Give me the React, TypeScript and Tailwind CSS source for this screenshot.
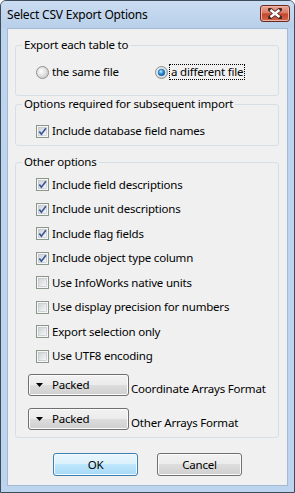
import React from "react";

function CheckBox({ checked }: { checked?: boolean }) {
  return (
    <svg width="13" height="13" viewBox="0 0 13 13" className="shrink-0">
      <defs>
        <linearGradient id="cbIn" x1="0" y1="0" x2="1" y2="1">
          <stop offset="0" stopColor="#cdd1d6" />
          <stop offset="1" stopColor="#f8f8f9" />
        </linearGradient>
      </defs>
      <rect x="0.5" y="0.5" width="12" height="12" fill="#f6f6f6" stroke="#8a978a" />
      <rect x="2.5" y="2.5" width="8" height="8" fill="url(#cbIn)" stroke="#b9bec5" strokeWidth="0.6" />
      {checked && (
        <path d="M3.3 6.4 L5.4 9.2 L9.9 3.3" fill="none" stroke="#3a5898" strokeWidth="1.7" />
      )}
    </svg>
  );
}

function Radio({ checked }: { checked?: boolean }) {
  return (
    <svg width="13" height="13" viewBox="0 0 13 13" className="shrink-0">
      <defs>
        <radialGradient id="rdOff" cx="0.4" cy="0.4" r="0.7">
          <stop offset="0" stopColor="#ffffff" />
          <stop offset="1" stopColor="#c4c4c4" />
        </radialGradient>
        <radialGradient id="rdOn" cx="0.4" cy="0.35" r="0.65">
          <stop offset="0" stopColor="#c6ecfd" />
          <stop offset="0.55" stopColor="#2b8fd8" />
          <stop offset="1" stopColor="#175a98" />
        </radialGradient>
      </defs>
      <circle cx="6.5" cy="6.5" r="6" fill="url(#rdOff)" stroke="#8f9090" />
      {checked && (
        <>
          <circle cx="6.5" cy="6.5" r="4.6" fill="#d3ebf9" />
          <circle cx="6.5" cy="6.5" r="3.3" fill="url(#rdOn)" stroke="#1d5a92" strokeWidth="0.6" />
        </>
      )}
    </svg>
  );
}

function CheckRow({ label, checked }: { label: string; checked?: boolean }) {
  return (
    <div className="h-[16px] flex items-center pl-[20px] gap-[3px] leading-[16px]">
      <CheckBox checked={checked} />
      <span>{label}</span>
    </div>
  );
}

function DropRow({ label }: { label: string }) {
  return (
    <div className="flex items-end pl-[12px] gap-[2px]">
      <div className="w-[101px] h-[22px] flex items-center rounded-[3px] border border-[#707070] bg-[linear-gradient(to_bottom,#f2f2f2_0%,#ebebeb_50%,#dddddd_50%,#cfcfcf_100%)] shadow-[inset_0_0_0_1px_#fbfbfb]">
        <svg width="7" height="4" viewBox="0 0 7 4" className="ml-[7px] mr-[9px]">
          <path d="M0 0 H7 L3.5 4 Z" fill="#000" />
        </svg>
        <span className="leading-[16px]">Packed</span>
      </div>
      <span className="leading-[16px] mb-[-1px]">{label}</span>
    </div>
  );
}

export default function App() {
  const others: [string, boolean][] = [
    ["Include field descriptions", true],
    ["Include unit descriptions", true],
    ["Include flag fields", true],
    ["Include object type column", true],
    ["Use InfoWorks native units", false],
    ["Use display precision for numbers", false],
    ["Export selection only", false],
    ["Use UTF8 encoding", false],
  ];

  return (
    <div className="w-[295px] h-[493px] flex flex-col bg-[#bdd4ee] border border-[#3e4b5b] rounded-t-[6px] overflow-hidden font-['Noto_Sans',sans-serif] text-[11.5px] tracking-[-0.2px] text-black">
      <div className="h-[27px] shrink-0 flex items-start bg-[linear-gradient(to_bottom,#cadcf1,#b9d0ea)]">
        <span className="pl-[6px] pt-[6px] leading-[16px] text-[12px]">Select CSV Export Options</span>
        <div className="ml-auto mr-[4px] mt-[4px] w-[30px] h-[17px] flex items-center justify-center rounded-[3px] border border-[#6b2a20] bg-[linear-gradient(to_bottom,#e9a696_0%,#d67864_48%,#c2442a_52%,#d16a50_100%)] shadow-[inset_0_0_0_1px_#eeb3a6]">
          <svg width="14" height="11" viewBox="0 0 14 11">
            <path d="M2 1.5 L12 9.5 M12 1.5 L2 9.5" stroke="#4a2620" strokeWidth="4" strokeLinecap="square" />
            <path d="M2.5 2 L11.5 9 M11.5 2 L2.5 9" stroke="#ffffff" strokeWidth="2.4" />
          </svg>
        </div>
      </div>

      <div className="flex-1 mx-[6px] mb-[6px] bg-[#f0f0f0] border border-[#a3bad5] flex flex-col">
        <fieldset className="ml-[7px] w-[264px] mt-[8px] border border-[#d5dfe5] rounded-[3px] pb-[15px]">
          <legend className="ml-[6px] px-[2px] leading-[16px]">Export each table to</legend>
          <div className="mt-[11px] h-[16px] flex items-center pl-[20px] leading-[16px]">
            <div className="w-[119px] flex items-center gap-[3px]">
              <Radio />
              <span>the same file</span>
            </div>
            <div className="flex items-center gap-[1px]">
              <Radio checked />
              <span className="border border-dotted border-black px-[1px] leading-[14px]">a different file</span>
            </div>
          </div>
        </fieldset>

        <fieldset className="ml-[7px] w-[264px] border border-[#d5dfe5] rounded-[3px] pb-[6px]">
          <legend className="ml-[6px] px-[2px] leading-[16px]">Options required for subsequent import</legend>
          <div className="mt-[11px]">
            <CheckRow label="Include database field names" checked />
          </div>
        </fieldset>

        <fieldset className="ml-[7px] w-[264px] mt-[8px] border border-[#d5dfe5] rounded-[3px] pb-[7px]">
          <legend className="ml-[6px] px-[2px] leading-[16px]">Other options</legend>
          <div className="mt-[6.5px] flex flex-col gap-[8.5px]">
            {others.map(([label, checked]) => (
              <CheckRow key={label} label={label} checked={checked} />
            ))}
          </div>
          <div className="mt-[10px] flex flex-col gap-[12px]">
            <DropRow label="Coordinate Arrays Format" />
            <DropRow label="Other Arrays Format" />
          </div>
        </fieldset>

        <div className="mt-[15px] flex justify-center gap-[19px]">
          <button className="w-[85px] h-[23px] rounded-[3px] border border-[#3c7fb1] bg-[linear-gradient(to_bottom,#eaf6fd_0%,#d9f0fc_50%,#bee6fd_50%,#a7d9f5_100%)] shadow-[inset_0_0_0_1px_#f4fbfe] leading-[16px]">
            OK
          </button>
          <button className="w-[85px] h-[23px] rounded-[3px] border border-[#707070] bg-[linear-gradient(to_bottom,#f2f2f2_0%,#ebebeb_50%,#dddddd_50%,#cfcfcf_100%)] shadow-[inset_0_0_0_1px_#fbfbfb] leading-[16px]">
            Cancel
          </button>
        </div>
      </div>
    </div>
  );
}
